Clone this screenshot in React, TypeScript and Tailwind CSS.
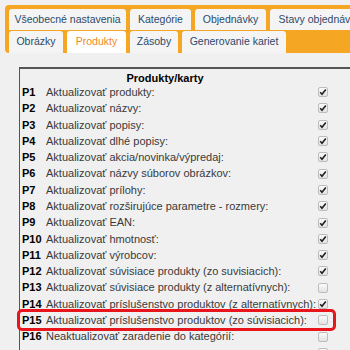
import React from 'react';

type Row = { code: string; label: string; checked: boolean; highlight?: boolean };

const rows: Row[] = [
    { code: 'P1', label: 'Aktualizovať produkty:', checked: true },
    { code: 'P2', label: 'Aktualizovať názvy:', checked: true },
    { code: 'P3', label: 'Aktualizovať popisy:', checked: true },
    { code: 'P4', label: 'Aktualizovať dlhé popisy:', checked: true },
    { code: 'P5', label: 'Aktualizovať akcia/novinka/výpredaj:', checked: true },
    { code: 'P6', label: 'Aktualizovať názvy súborov obrázkov:', checked: true },
    { code: 'P7', label: 'Aktualizovať prílohy:', checked: true },
    { code: 'P8', label: 'Aktualizovať rozširujúce parametre - rozmery:', checked: true },
    { code: 'P9', label: 'Aktualizovať EAN:', checked: true },
    { code: 'P10', label: 'Aktualizovať hmotnosť:', checked: true },
    { code: 'P11', label: 'Aktualizovať výrobcov:', checked: true },
    { code: 'P12', label: 'Aktualizovať súvisiace produkty (zo suvisiacich):', checked: true },
    { code: 'P13', label: 'Aktualizovať súvisiace produkty (z alternatívnych):', checked: false },
    { code: 'P14', label: 'Aktualizovať príslušenstvo produktov (z alternatívnych):', checked: true },
    { code: 'P15', label: 'Aktualizovať príslušenstvo produktov (zo súvisiacich):', checked: false, highlight: true },
    { code: 'P16', label: 'Neaktualizovať zaradenie do kategórií:', checked: false },
    { code: '', label: '', checked: false },
];

const Tab: React.FC<{ label: string; active?: boolean; w: string; h: string }> = ({ label, active, w, h }) => (
    <div
        className={`${w} ${h} shrink-0 flex items-center justify-center rounded-t-[3px] whitespace-nowrap text-[10.5px] ${
            active ? 'bg-white text-[#f0891f]' : 'bg-[#f4f4f4] text-[#2c4a6b]'
        }`}
    >
        {label}
    </div>
);

const Checkbox: React.FC<{ checked: boolean }> = ({ checked }) => (
    <div className="w-[10px] h-[10px] rounded-[2px] border border-[#bdbdbd] bg-gradient-to-b from-[#fbfbfb] to-[#e2e2e2] flex items-center justify-center">
        {checked && (
            <svg width="8" height="8" viewBox="0 0 8 8">
                <path d="M1.2 4.2 L3 6.2 L6.8 1.4" fill="none" stroke="#222" strokeWidth="1.6" />
            </svg>
        )}
    </div>
);

export default function App() {
    return (
        <div
            className="w-[350px] h-[350px] overflow-hidden bg-[#f0f0f0] text-[11px]"
            style={{ fontFamily: '"Liberation Sans", Arial, sans-serif' }}
        >
            <div className="pt-[5px] pl-[5px]">
                <div className="w-[400px] bg-[#f5a623] rounded-[4px] pt-[4px] pl-[4px] flex flex-col gap-[1px]">
                    <div className="flex gap-[4px]">
                        <Tab label="Všeobecné nastavenia" w="w-[117px]" h="h-[21px]" />
                        <Tab label="Kategórie" w="w-[61px]" h="h-[21px]" />
                        <Tab label="Objednávky" w="w-[71px]" h="h-[21px]" />
                        <Tab label="Stavy objednávok" w="w-[100px]" h="h-[21px]" />
                    </div>
                    <div className="flex gap-[4px]">
                        <Tab label="Obrázky" w="w-[54px]" h="h-[22px]" />
                        <Tab label="Produkty" w="w-[59px]" h="h-[22px]" active />
                        <Tab label="Zásoby" w="w-[48px]" h="h-[22px]" />
                        <Tab label="Generovanie kariet" w="w-[104px]" h="h-[22px]" />
                    </div>
                </div>
            </div>
            <div className="mt-[14px] ml-[19px] border-l border-t-2 border-[#555] text-[#3a3a3a]">
                <div className="h-[15px] flex items-end justify-center font-bold text-black pr-[40px] leading-none">Produkty/karty</div>
                <div>
                    {rows.map((r, i) => (
                        <div
                            key={i}
                            className={`h-[16.3px] w-[313px] flex items-center ${
                                r.highlight ? 'outline outline-[3px] outline-[#e8161c] rounded-[2px]' : ''
                            }`}
                        >
                            <div className="w-[26px] shrink-0 pl-[2px] font-bold text-black">{r.code}</div>
                            <div className="flex-1 min-w-0 whitespace-nowrap">{r.label}</div>
                            <div className="w-[16px] shrink-0 pr-[5px] flex justify-center">
                                <Checkbox checked={r.checked} />
                            </div>
                        </div>
                    ))}
                </div>
            </div>
        </div>
    );
}
